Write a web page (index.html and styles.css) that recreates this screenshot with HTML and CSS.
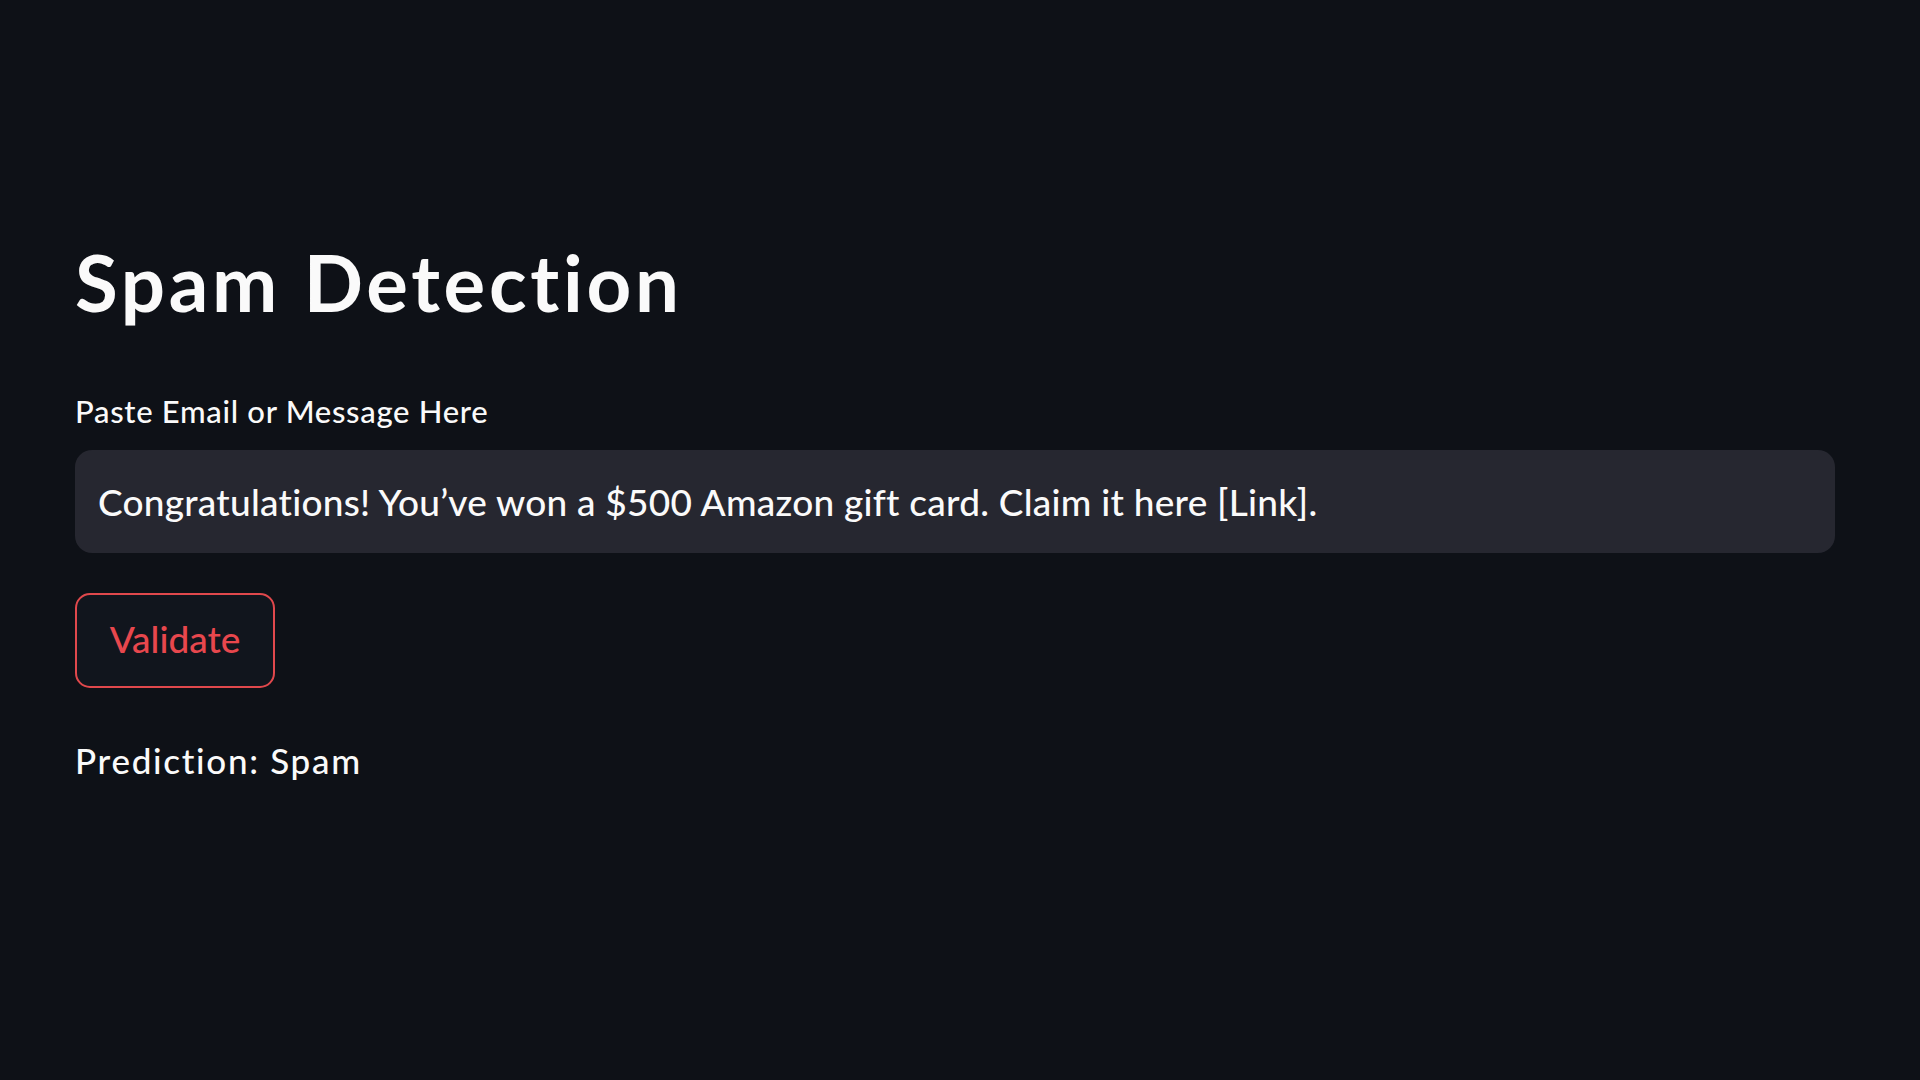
FILE: index.html
```html
<!DOCTYPE html>
<html lang="en">
<head>
<meta charset="utf-8">
<title>Spam Detection</title>
<link rel="stylesheet" href="styles.css">
</head>
<body>
<main class="app">
  <h1 class="title">Spam Detection</h1>
  <label class="field-label" for="msg">Paste Email or Message Here</label>
  <div class="input-box" id="msg">Congratulations! You’ve won a $500 Amazon gift card. Claim it here [Link].</div>
  <button class="validate-btn" type="button">Validate</button>
  <p class="prediction">Prediction: Spam</p>
</main>
</body>
</html>
```
FILE: styles.css
```css
html, body {
  margin: 0;
  padding: 0;
  background: #0e1117;
  height: 100%;
}
body {
  font-family: "Lato", "Open Sans", sans-serif;
  color: #fafafa;
}
.app {
  display: flex;
  flex-direction: column;
  align-items: flex-start;
  width: 1760px;
  padding: 235px 0 0 75px;
  box-sizing: content-box;
}
.title {
  margin: 0;
  font-size: 78px;
  line-height: 94px;
  font-weight: 700;
  letter-spacing: 3.7px;
}
.field-label {
  margin-top: 64px;
  font-size: 31px;
  line-height: 37px;
  font-weight: 500;
  letter-spacing: 0.7px;
}
.input-box {
  margin-top: 20px;
  align-self: stretch;
  height: 103px;
  box-sizing: border-box;
  background: #262730;
  border-radius: 17px;
  padding: 0 23px;
  display: flex;
  align-items: center;
  font-size: 37px;
  line-height: 44px;
  font-weight: 500;
  letter-spacing: 0.25px;
}
.validate-btn {
  margin-top: 40px;
  width: 200px;
  height: 95px;
  box-sizing: border-box;
  background: #11151d;
  border: 2px solid #e0484c;
  border-radius: 15px;
  color: #e8474d;
  font-family: "Lato", "Open Sans", sans-serif;
  font-size: 37px;
  line-height: 44px;
  font-weight: 500;
  padding: 0 0 4px;
  cursor: pointer;
}
.prediction {
  margin: 51px 0 0;
  font-size: 35px;
  line-height: 42px;
  font-weight: 500;
  letter-spacing: 1.7px;
}
```
